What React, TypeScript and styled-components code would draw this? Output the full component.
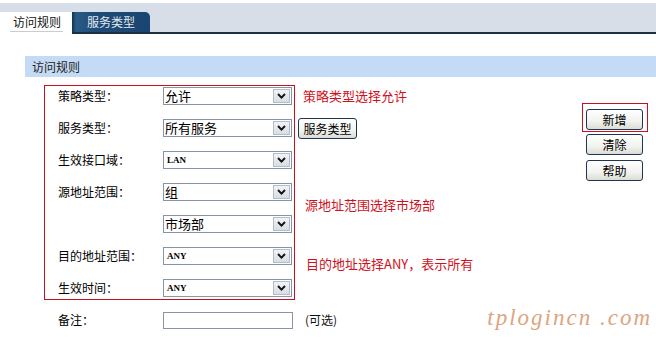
import React, { FC } from "react";
import styled, { createGlobalStyle } from "styled-components";

const GlobalStyle = createGlobalStyle`
  html, body {
    margin: 0;
    padding: 0;
    background: #fff;
  }
  body {
    font-family: "Noto Sans CJK SC", "Noto Sans", sans-serif;
    font-size: 12px;
    color: #000;
  }
`;

const Page = styled.div`
  width: 656px;
  height: 341px;
  overflow: hidden;
  background: #fff;
`;

const TabStrip = styled.div`
  margin-top: 3px;
  height: 29px;
  display: flex;
  align-items: flex-end;
  background: #d7dee8;
  border-bottom: 2px solid #1d3040;
`;

const ActiveTab = styled.div`
  width: 72px;
  height: 22px;
  margin-bottom: -2px;
  background: #fff;
  box-sizing: border-box;
  padding-left: 13px;

  span {
    display: inline-block;
    line-height: 19px;
    font-size: 12px;
    color: #111;
    border-bottom: 1px solid #c9cdd2;
    padding: 0 1px;
    margin-left: -3px;
    padding-left: 3px;
    padding-right: 2px;
  }
`;

const Tab = styled.div`
  width: 78px;
  height: 20px;
  box-sizing: border-box;
  padding-left: 15px;
  line-height: 20px;
  font-size: 12px;
  color: #e2e9f0;
  background: linear-gradient(to right, #0e3354 0px, #2a5a86 4px, #1f4c76 30%, #1a4570 100%);
  border-top-right-radius: 5px;
`;

const SectionTitle = styled.div`
  margin: 22px 0 0 25px;
  height: 21px;
  line-height: 21px;
  padding-left: 7px;
  background: #c5daf5;
  font-size: 12px;
  color: #222;
`;

const FormGrid = styled.div`
  margin: 3px 8px 0 44px;
  display: grid;
  grid-template-columns: 119px 132px 1fr 66px;
  grid-template-rows: repeat(8, 32px);
`;

const RedFrame = styled.div`
  grid-row: 1 / 8;
  grid-column: 1 / 3;
  margin: 5px 0 4px;
  border: 1px solid #c8101e;
  pointer-events: none;
`;

const Label = styled.div<{ $row: number }>`
  grid-row: ${(p) => p.$row};
  grid-column: 1;
  align-self: center;
  padding-left: 14px;
  font-size: 12px;
  line-height: 16px;
  color: #000;
`;

const SelectBox = styled.div<{ $row: number }>`
  grid-row: ${(p) => p.$row};
  grid-column: 2;
  align-self: center;
  width: 129px;
  height: 18px;
  box-sizing: border-box;
  border: 1px solid #8795a6;
  background: #fff;
  display: flex;
  align-items: center;
`;

const SelectValue = styled.span<{ $latin?: boolean }>`
  flex: 1;
  padding-left: ${(p) => (p.$latin ? "3px" : "1px")};
  font-family: ${(p) =>
    p.$latin ? '"Liberation Serif", serif' : '"Noto Sans CJK SC", sans-serif'};
  font-weight: ${(p) => (p.$latin ? 700 : 400)};
  font-size: ${(p) => (p.$latin ? "9px" : "13px")};
  line-height: 16px;
  color: #000;
  white-space: nowrap;
`;

const ArrowBox = styled.span`
  width: 17px;
  height: 14px;
  margin-right: 1px;
  box-sizing: border-box;
  border: 1px solid #b3bcc8;
  background: linear-gradient(#f1f3f5, #d9dee4);
  display: flex;
  align-items: center;
  justify-content: center;
`;

const TextInput = styled.div<{ $row: number }>`
  grid-row: ${(p) => p.$row};
  grid-column: 2;
  align-self: center;
  width: 130px;
  height: 17px;
  box-sizing: border-box;
  border: 1px solid #8795a6;
  background: #fff;
`;

const Button = styled.button`
  height: 21px;
  box-sizing: border-box;
  padding: 0;
  border: 1px solid #1f3650;
  border-radius: 3px;
  background: linear-gradient(#ffffff, #f2f2ee 60%, #dcdcd6);
  font-family: "Noto Sans CJK SC", sans-serif;
  font-size: 12px;
  line-height: 18px;
  color: #000;
`;

const InlineButton = styled(Button)`
  grid-row: 2;
  grid-column: 3;
  justify-self: start;
  align-self: center;
  margin: 1px 0 0 3px;
  width: 59px;
`;

const Note = styled.div<{ $row: number; $top: number; $left: number; $red?: boolean }>`
  grid-row: ${(p) => p.$row};
  grid-column: 3;
  align-self: start;
  margin-top: ${(p) => p.$top}px;
  margin-left: ${(p) => p.$left}px;
  font-size: ${(p) => (p.$red ? "13px" : "12px")};
  line-height: 16px;
  color: ${(p) => (p.$red ? "#d0101c" : "#111")};
  white-space: nowrap;
`;

const ActionColumn = styled.div`
  grid-row: 1 / 6;
  grid-column: 4;
  align-self: start;
  margin-top: 23px;
  display: flex;
  flex-direction: column;
  align-items: flex-start;
  gap: 3px;

  ${Button} {
    width: 57px;
  }
`;

const HighlightBox = styled.div`
  padding: 5px 4px 1px 3px;
  border: 1px solid #c8101e;
`;

const SideButton = styled(Button)<{ $gap?: number }>`
  margin-left: 4px;
  margin-top: ${(p) => p.$gap ?? 0}px;
`;

const Watermark = styled.div`
  grid-row: 8;
  grid-column: 3 / 5;
  justify-self: end;
  align-self: center;
  margin: -4px -4px 0 0;
  font-family: "Liberation Serif", serif;
  font-style: italic;
  font-size: 23px;
  letter-spacing: 2px;
  line-height: 28px;
  color: #dca57f;
  white-space: nowrap;
`;

const Chevron: FC = () => (
  <svg width="9" height="6" viewBox="0 0 9 6">
    <polyline points="1,1 4.5,4.6 8,1" fill="none" stroke="#111" strokeWidth="1.9" />
  </svg>
);

type SelectProps = { row: number; value: string; latin?: boolean };

const Select: FC<SelectProps> = ({ row, value, latin }) => (
  <SelectBox $row={row}>
    <SelectValue $latin={latin}>{value}</SelectValue>
    <ArrowBox>
      <Chevron />
    </ArrowBox>
  </SelectBox>
);

const App: FC = () => (
  <Page>
    <GlobalStyle />
    <TabStrip>
      <ActiveTab>
        <span>访问规则</span>
      </ActiveTab>
      <Tab>服务类型</Tab>
    </TabStrip>

    <SectionTitle>访问规则</SectionTitle>

    <FormGrid>
      <RedFrame />

      <Label $row={1}>策略类型：</Label>
      <Select row={1} value="允许" />
      <Note $row={1} $top={8} $left={8} $red>策略类型选择允许</Note>

      <Label $row={2}>服务类型：</Label>
      <Select row={2} value="所有服务" />
      <InlineButton type="button">服务类型</InlineButton>

      <Label $row={3}>生效接口域：</Label>
      <Select row={3} value="LAN" latin />

      <Label $row={4}>源地址范围：</Label>
      <Select row={4} value="组" />
      <Note $row={4} $top={21} $left={10} $red>源地址范围选择市场部</Note>

      <Select row={5} value="市场部" />

      <Label $row={6}>目的地址范围：</Label>
      <Select row={6} value="ANY" latin />
      <Note $row={6} $top={16} $left={11} $red>目的地址选择ANY，表示所有</Note>

      <Label $row={7}>生效时间：</Label>
      <Select row={7} value="ANY" latin />

      <Label $row={8}>备注：</Label>
      <TextInput $row={8} />
      <Note $row={8} $top={8} $left={10}>(可选)</Note>

      <ActionColumn>
        <HighlightBox>
          <Button type="button">新增</Button>
        </HighlightBox>
        <SideButton type="button" $gap={-1}>清除</SideButton>
        <SideButton type="button" $gap={2}>帮助</SideButton>
      </ActionColumn>

      <Watermark>tplogincn .com</Watermark>
    </FormGrid>
  </Page>
);

export default App;
